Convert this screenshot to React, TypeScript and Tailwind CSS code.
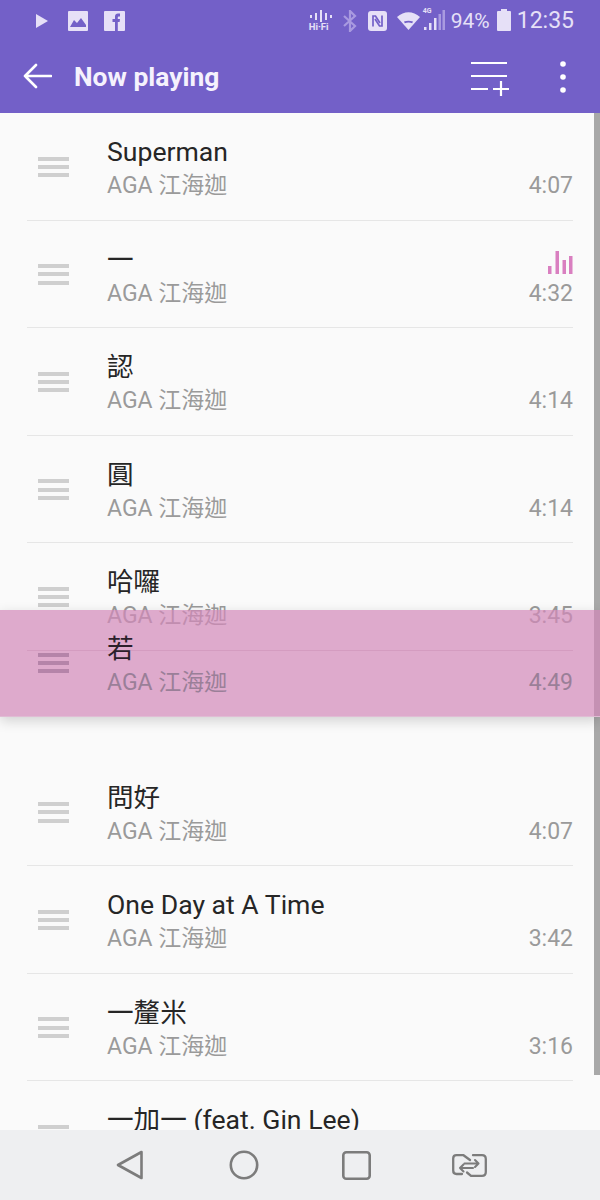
import React from "react";

const FONT = { fontFamily: 'Roboto, "Noto Sans CJK TC", sans-serif' };

function Handle({ cls = "bg-[#cfcfcf]" }: { cls?: string }) {
  return (
    <div className="w-[31px] flex flex-col gap-[4.3px] shrink-0">
      <div className={`h-[4px] ${cls}`} />
      <div className={`h-[4px] ${cls}`} />
      <div className={`h-[4px] ${cls}`} />
    </div>
  );
}

function Row({ title, time, playing, divider = true }: { title: string; time?: string; playing?: boolean; divider?: boolean }) {
  return (
    <div className={`h-[107.6px] mx-[27px] shrink-0 relative flex items-start ${divider ? "border-b border-[#e6e6e6]" : ""}`}>
      <div className="ml-[11px] mt-[43.5px]">
        <Handle />
      </div>
      <div className="ml-[38px] flex-1 min-w-0">
        <div className="mt-[22px] h-[34px] leading-[34px] text-[26.6px] text-[#262626] whitespace-nowrap">{title}</div>
        {time && <div className="h-[34px] leading-[34px] text-[23px] text-[#9a9a9a] whitespace-nowrap">AGA 江海迦</div>}
      </div>
      {playing && (
        <svg className="absolute right-0 top-[30px]" width="25" height="23" viewBox="0 0 25 23" fill="#d97fc0">
          <rect x="0" y="15" width="3.5" height="8" />
          <rect x="7.5" y="0" width="3.5" height="23" />
          <rect x="14.5" y="9" width="3.5" height="14" />
          <rect x="21" y="5" width="3.5" height="18" />
        </svg>
      )}
      {time && <div className="absolute right-0 top-[56px] h-[34px] leading-[34px] text-[23px] text-[#9a9a9a]">{time}</div>}
    </div>
  );
}

function StatusBar() {
  return (
    <div className="h-[40px] pt-[1px] flex items-center pl-[36px] pr-[26px] text-[#e6e0f7] shrink-0">
      <svg width="12" height="14" viewBox="0 0 12 14" fill="#e6e0f7"><path d="M0 0 L12 7 L0 14 Z" /></svg>
      <svg className="ml-[20px]" width="20" height="20" viewBox="0 0 20 20">
        <rect width="20" height="20" rx="1" fill="#e6e0f7" />
        <path d="M2 16 L6 9 L9 12 L13 7 L18 14 L18 16 Z" fill="#7360c8" />
      </svg>
      <svg className="ml-[16px]" width="21" height="20" viewBox="0 0 21 20">
        <rect width="21" height="20" rx="1" fill="#e6e0f7" />
        <path d="M11 20 V11 H8.5 V8 H11 V5.5 C11 3.5 12.2 2.5 14 2.5 H16 V5.5 H14.6 C14 5.5 13.8 5.8 13.8 6.4 V8 H16 L15.6 11 H13.8 V20 Z" fill="#7360c8" />
      </svg>
      <div className="flex-1" />
      <svg width="23" height="22" viewBox="0 0 23 22" fill="#e6e0f7">
        <rect x="1" y="5" width="2" height="3" /><rect x="6" y="3" width="2" height="7" /><rect x="11" y="0" width="2" height="12" /><rect x="16" y="3" width="2" height="7" /><rect x="21" y="5" width="2" height="3" />
      </svg>
      <div className="w-0 relative">
        <div className="absolute left-[-23px] top-[1px] text-[9.5px] leading-[10px] font-bold whitespace-nowrap">Hi·Fi</div>
      </div>
      <svg className="ml-[11px]" width="14" height="22" viewBox="0 0 14 22" fill="none" stroke="#a99ae0" strokeWidth="2.2">
        <path d="M1 6 L12 16 L7 21 V1 L12 6 L1 16" />
      </svg>
      <svg className="ml-[11px]" width="19" height="20" viewBox="0 0 19 20">
        <rect width="19" height="20" rx="3" fill="#e6e0f7" />
        <path d="M5 15.5 V5 H7.5 L12 12 M14 4.5 V15 H11.5 L7 8" stroke="#7360c8" strokeWidth="1.7" fill="none" />
      </svg>
      <svg className="ml-[10px]" width="23" height="18" viewBox="0 0 23 18">
        <path d="M0 5 C7 -1.5 16 -1.5 23 5 L11.5 18 Z" fill="#e6e0f7" />
        <path d="M7 9.5 Q11.5 8 16 9.5 L15.2 11.2 Q11.5 10 7.8 11.2 Z" fill="#7360c8" />
      </svg>
      <div className="ml-[4px] relative w-[21px] h-[22px]">
        <div className="absolute left-[-1px] top-[-3px] text-[7px] leading-[8px] font-bold">4G</div>
        <svg width="21" height="22" viewBox="0 0 21 22" className="absolute left-0 top-0">
          <rect x="0" y="17" width="2.5" height="3" fill="#e6e0f7" />
          <rect x="5" y="13" width="2.5" height="7" fill="#e6e0f7" />
          <rect x="10" y="8" width="2.5" height="12" fill="#e6e0f7" />
          <rect x="14.5" y="4" width="2.5" height="16" fill="#a99ae0" />
          <rect x="18.5" y="0" width="2.5" height="20" fill="#a99ae0" />
        </svg>
      </div>
      <span className="ml-[6px] text-[21px] leading-[40px]">94%</span>
      <div className="ml-[7px] relative w-[14px] h-[20px] rounded-[1px] bg-[#e6e0f7]">
        <div className="absolute left-[4px] top-[-2px] w-[6px] h-[2px] bg-[#e6e0f7]" />
      </div>
      <span className="ml-[6px] text-[23px] leading-[40px]">12:35</span>
    </div>
  );
}

function Header() {
  return (
    <div className="h-[73px] flex items-center shrink-0 pt-[2px]">
      <svg className="ml-[23px] mb-[3px]" width="29" height="26" viewBox="0 0 29 26" fill="none" stroke="#fff" strokeWidth="2.6" strokeLinecap="round" strokeLinejoin="round">
        <path d="M28 13 H2 M13 2 L2 13 L13 24" />
      </svg>
      <span className="ml-[22px] text-[26.4px] font-bold text-[#f5f2fd]">Now playing</span>
      <div className="flex-1" />
      <svg width="39" height="35" viewBox="0 0 39 35" stroke="#fff" strokeWidth="2.2" fill="none" className="mr-[50px] mt-[2px]">
        <path d="M1 2 H37 M1 15 H37 M1 28 H18 M23 28 H39 M31 20 V35" />
      </svg>
      <svg width="8" height="34" viewBox="0 0 8 34" fill="#fff" className="mr-[33px] mb-[2px]">
        <circle cx="4" cy="4" r="2.8" /><circle cx="4" cy="17" r="2.8" /><circle cx="4" cy="30" r="2.8" />
      </svg>
    </div>
  );
}

export default function App() {
  return (
    <div className="w-[600px] h-[1200px] flex flex-col overflow-hidden relative bg-[#fafafa]" style={FONT}>
      <div className="bg-[#7360c8] h-[113px] shrink-0 flex flex-col">
        <StatusBar />
        <Header />
      </div>
      <div className="flex-1 min-h-0 overflow-hidden flex flex-col">
        <Row title="Superman" time="4:07" />
        <Row title="一" time="4:32" playing />
        <Row title="認" time="4:14" />
        <Row title="圓" time="4:14" />
        <Row title="哈囉" time="3:45" />
        <div className="h-[107.6px] shrink-0" />
        <Row title="問好" time="4:07" />
        <Row title="One Day at A Time" time="3:42" />
        <Row title="一釐米" time="3:16" />
        <Row title="一加一 (feat. Gin Lee)" divider={false} />
      </div>
      <div className="h-[70px] shrink-0 bg-[#eeeff1] flex items-center relative">
        <svg className="ml-[116px]" width="28" height="30" viewBox="0 0 28 30" fill="none" stroke="#7c7c7c" strokeWidth="2.6" strokeLinejoin="round">
          <path d="M25.5 2 L2 15 L25.5 28 Z" />
        </svg>
        <svg className="ml-[85px]" width="30" height="30" viewBox="0 0 30 30" fill="none" stroke="#7c7c7c" strokeWidth="2.6">
          <circle cx="15" cy="15" r="13.2" />
        </svg>
        <svg className="ml-[83px]" width="29" height="29" viewBox="0 0 29 29" fill="none" stroke="#7c7c7c" strokeWidth="2.6">
          <rect x="1.3" y="1.3" width="26.4" height="26.4" rx="3" />
        </svg>
        <svg className="ml-[81px]" width="35" height="23" viewBox="0 0 35 23" fill="none" stroke="#7c7c7c" strokeWidth="2.3" strokeLinejoin="round" strokeLinecap="round">
          <path d="M11.5 1.2 H4.5 Q1.2 1.2 1.2 4.5 V16.5 Q1.2 20 4.5 20 H10 M11.5 1.2 L18 6" />
          <path d="M21 1.2 H30 Q33.8 1.2 33.8 5 V18 Q33.8 21.8 30 21.8 H19 L15 18.5" />
          <path d="M12.5 9.5 H26.5 M23 6 L26.5 9.5 L23 13" strokeWidth="2.1" />
          <path d="M21 14 H8 M11.5 10.5 L8 14 L11.5 17.5" strokeWidth="2.1" />
        </svg>
      </div>
      <div className="absolute right-0 top-[113px] h-[962px] w-[6px] bg-[#a8a8a8]" />
      <div className="absolute left-0 right-0 top-[610px] h-[107px] bg-[#d288b8]/70 shadow-[0_4px_12px_rgba(0,0,0,0.16)] border-b border-[#e0bcd4]">
        <div className="mx-[27px] h-[41px] border-b border-[#d49cc0]" />
        <div className="absolute left-[38px] top-[42.5px]"><Handle cls="bg-[#b584a9]" /></div>
        <div className="absolute left-[107px] top-[22px] h-[34px] leading-[34px] text-[26.6px] text-[#2b1f2a]">若</div>
        <div className="absolute left-[107px] top-[56px] h-[34px] leading-[34px] text-[23px] text-[#9a7f98]">AGA 江海迦</div>
        <div className="absolute right-[27px] top-[56px] h-[34px] leading-[34px] text-[23px] text-[#9a7f98]">4:49</div>
      </div>
    </div>
  );
}
